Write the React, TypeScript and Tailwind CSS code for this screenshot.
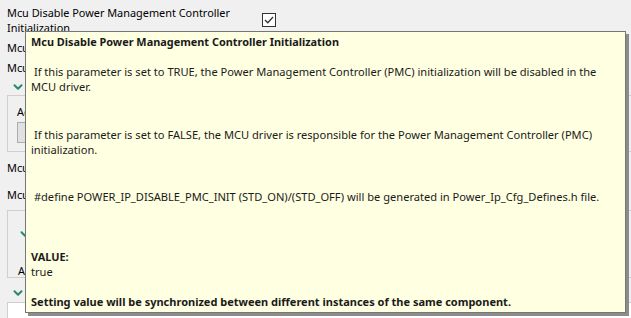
import React from 'react';
import { ChevronDown } from 'lucide-react';

const font = { fontFamily: '"Noto Sans", "Segoe UI", sans-serif' };

function Chevron() {
  return <ChevronDown size={14} strokeWidth={3.5} className="text-[#2b8a6a]" />;
}

export default function App() {
  return (
    <div className="relative w-[631px] h-[318px] overflow-hidden bg-[#f0f0f0] text-[10.9px] leading-[15px] text-black" style={font}>
      {/* Settings page behind the tooltip */}
      <div className="pl-[7px] pt-[5px]">
        <div className="flex items-start">
          <div className="w-[240px]">Mcu Disable Power Management Controller Initialization</div>
          <div className="ml-[15px] mt-[8px] w-[14px] h-[14px] border border-[#333] bg-white flex items-center justify-center">
            <svg width="10" height="8" viewBox="0 0 10 8">
              <path d="M1 4 L3.8 6.8 L9 1" fill="none" stroke="#333" strokeWidth="1.3" />
            </svg>
          </div>
        </div>
        <div className="mt-[5px] whitespace-nowrap">Mcu Clock Configuration</div>
        <div className="mt-[5px] whitespace-nowrap">Mcu Mode Settings</div>
        <div className="mt-[5px] pl-[4px] h-[12px]"><Chevron /></div>
        <div className="mt-[3px] h-[57px] border border-[#cfcfcf] border-r-0 pl-[9px] pt-[8px]">
          <div>Add</div>
          <div className="mt-[3px] w-[80px] h-[21px] border border-[#adadad] bg-[#e1e1e1]"></div>
        </div>
        <div className="mt-[8px] whitespace-nowrap">Mcu Reset Setting</div>
        <div className="mt-[12px] whitespace-nowrap">Mcu Ram Sector Setting</div>
        <div className="mt-[8px] h-[68px] border border-[#cfcfcf] border-r-0 pl-[10px] pt-[16px]">
          <Chevron />
          <div className="mt-[22px]">Add</div>
        </div>
        <div className="mt-[8px] pl-[4px] h-[12px]"><Chevron /></div>
        <div className="mt-[4px] h-[20px] border border-[#cfcfcf] border-r-0 bg-white"></div>
      </div>

      {/* Tooltip */}
      <div className="absolute left-[25px] top-[31px] w-[601px] h-[282px] bg-[#ffffe1] border border-[#767676] shadow-[3px_3px_0_#8c8c8c] pl-[5px] pt-[2px] text-[11.1px] text-[#1a1a1a]">
        <div className="font-bold text-[10.9px] whitespace-nowrap">Mcu Disable Power Management Controller Initialization</div>
        <div className="mt-[15px] whitespace-nowrap">
          <div>&nbsp;If this parameter is set to TRUE, the Power Management Controller (PMC) initialization will be disabled in the</div>
          <div>MCU driver.</div>
        </div>
        <div className="mt-[33px] whitespace-nowrap">
          <div>&nbsp;If this parameter is set to FALSE, the MCU driver is responsible for the Power Management Controller (PMC)</div>
          <div>initialization.</div>
        </div>
        <div className="mt-[32px] whitespace-nowrap">&nbsp;#define POWER_IP_DISABLE_PMC_INIT (STD_ON)/(STD_OFF) will be generated in Power_Ip_Cfg_Defines.h file.</div>
        <div className="mt-[45px]">
          <div className="font-bold text-[10.9px]">VALUE:</div>
          <div>true</div>
        </div>
        <div className="mt-[15px] font-bold text-[11px] whitespace-nowrap">Setting value will be synchronized between different instances of the same component.</div>
      </div>
    </div>
  );
}
